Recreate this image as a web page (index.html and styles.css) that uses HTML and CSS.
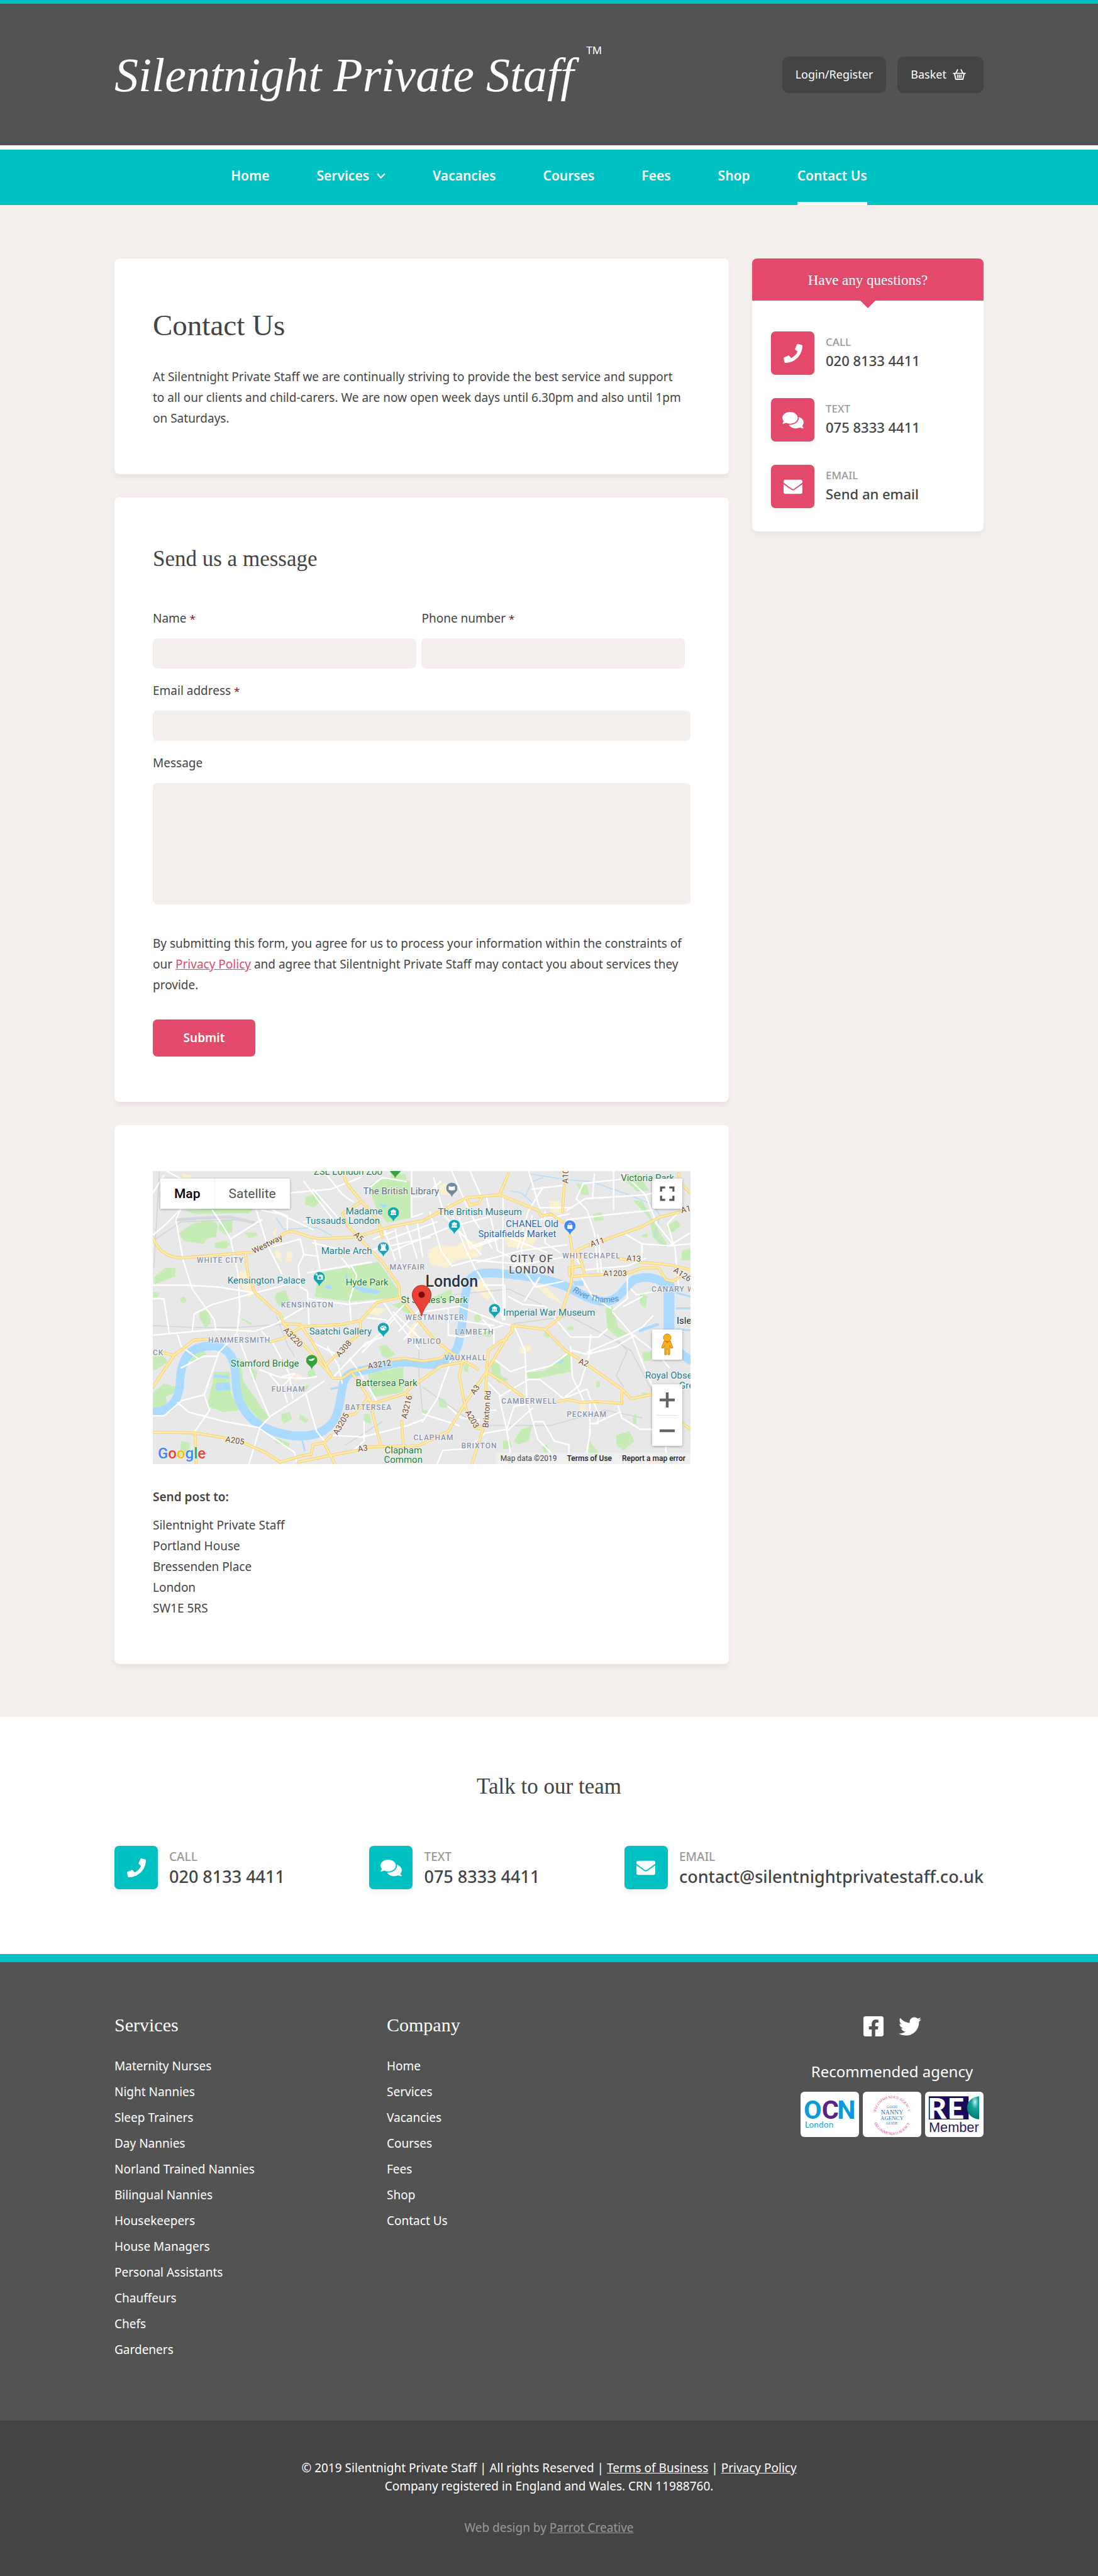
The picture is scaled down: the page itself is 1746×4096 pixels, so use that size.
FILE: index.html
```html
<!DOCTYPE html>
<html lang="en">
<head>
    <meta charset="UTF-8">
    <meta name="viewport" content="width=device-width, initial-scale=1.0">
    <title>Contact Us | Silentnight Private Staff</title>
    <link rel="stylesheet" href="styles.css">
</head>
<body>
    <!-- Shared icons -->
    <svg class="sprite" aria-hidden="true">
        <symbol id="icon-phone" viewBox="0 0 512 512"><path d="M493.4 24.6l-104-24c-11.3-2.6-22.9 3.3-27.5 13.9l-48 112c-4.2 9.8-1.4 21.3 6.9 28l60.6 49.6c-36 76.7-98.9 140.5-177.2 177.2l-49.6-60.6c-6.8-8.3-18.2-11.1-28-6.9l-112 48C3.9 366.5-2 378.1.6 389.4l24 104C27.1 504.2 36.7 512 48 512c256.1 0 464-207.5 464-464 0-11.2-7.7-20.9-18.6-23.4z"/></symbol>
        <symbol id="icon-comments" viewBox="0 0 576 512"><path d="M416 192c0-88.4-93.1-160-208-160S0 103.6 0 192c0 34.3 14.1 65.9 38 92-13.4 30.2-35.5 54.2-35.8 54.5-2.2 2.3-2.8 5.7-1.5 8.7S4.8 352 8 352c36.6 0 66.9-12.3 88.7-25 32.2 15.7 70.3 25 111.3 25 114.9 0 208-71.6 208-160zm122 220c23.9-26 38-57.7 38-92 0-66.9-53.5-124.2-129.3-148.1.9 6.6 1.3 13.3 1.3 20.1 0 105.9-107.7 192-240 192-10.8 0-21.3-.8-31.7-1.9C207.8 439.6 281.8 480 368 480c41 0 79.1-9.2 111.3-25 21.8 12.7 52.1 25 88.7 25 3.2 0 6.1-1.9 7.3-4.8 1.3-2.9.7-6.3-1.5-8.7-.3-.3-22.4-24.2-35.8-54.5z"/></symbol>
        <symbol id="icon-envelope" viewBox="0 0 512 512"><path d="M502.3 190.8c3.9-3.1 9.7-.2 9.7 4.7V400c0 26.5-21.5 48-48 48H48c-26.5 0-48-21.5-48-48V195.6c0-5 5.7-7.8 9.7-4.7 22.4 17.4 52.1 39.5 154.1 113.6 21.1 15.4 56.7 47.8 92.2 47.6 35.7.3 72-32.8 92.3-47.6 102-74.1 131.6-96.3 154-113.7zM256 320c23.2.4 56.6-29.2 73.4-41.4 132.7-96.3 142.8-104.7 173.4-128.7 5.8-4.5 9.2-11.5 9.2-18.9v-19c0-26.5-21.5-48-48-48H48c-26.5 0-48 21.5-48 48v19c0 7.4 3.4 14.3 9.2 18.9 30.6 23.9 40.7 32.4 173.4 128.7 16.8 12.2 50.2 41.8 73.4 41.4z"/></symbol>
        <symbol id="pin" viewBox="0 0 18 23"><path d="M9 0a9 9 0 0 1 9 9c0 4-3 6-5 8-2 2-3 3-4 6-1-3-2-4-4-6-2-2-5-4-5-8a9 9 0 0 1 9-9z"/></symbol>
        <symbol id="museum" viewBox="0 0 10 10"><path fill="#fff" d="M5 0l5 3v1H0V3zM1 4h8v4H1zM0 8h10v2H0z"/><path fill="#12a5b5" d="M3 5h1v3H3zM6 5h1v3H6z"/></symbol>
    </svg>

    <header class="header">
        <div class="container header-inner">
            <a href="#" class="logo">Silentnight Private Staff<sup class="logo-tm">TM</sup></a>
            <div class="header-actions">
                <a href="#" class="header-btn">Login/Register</a>
                <a href="#" class="header-btn basket-btn">Basket
                    <svg class="basket-icon" viewBox="0 0 22 18" aria-hidden="true">
                        <path d="M8 1L5 7M14 1l3 6M1 7h20M3 8l2 9h12l2-9M8 10v4M11 10v4M14 10v4" fill="none" stroke="#fff" stroke-width="2" stroke-linecap="round" stroke-linejoin="round"/>
                    </svg>
                </a>
            </div>
        </div>
    </header>

    <nav class="nav">
        <a href="#" class="nav-link">Home</a>
        <a href="#" class="nav-link">Services
            <svg class="nav-arrow" viewBox="0 0 13 9" aria-hidden="true"><path d="M1 1l5 6 6-6" fill="none" stroke="#fff" stroke-width="2"/></svg>
        </a>
        <a href="#" class="nav-link">Vacancies</a>
        <a href="#" class="nav-link">Courses</a>
        <a href="#" class="nav-link">Fees</a>
        <a href="#" class="nav-link">Shop</a>
        <a href="#" class="nav-link active">Contact Us</a>
    </nav>

    <main class="main">
        <div class="container columns">
            <div class="content">
                <section class="card">
                    <h1>Contact Us</h1>
                    <p class="intro">At Silentnight Private Staff we are continually striving to provide the best service and support to all our clients and child-carers. We are now open week days until 6.30pm and also until 1pm on Saturdays.</p>
                </section>

                <section class="card">
                    <h2>Send us a message</h2>
                    <form class="contact-form">
                        <div class="field field-half">
                            <label for="name">Name <span class="required">*</span></label>
                            <input type="text" id="name">
                        </div>
                        <div class="field field-half">
                            <label for="phone">Phone number <span class="required">*</span></label>
                            <input type="tel" id="phone">
                        </div>
                        <div class="field">
                            <label for="email">Email address <span class="required">*</span></label>
                            <input type="email" id="email">
                        </div>
                        <div class="field">
                            <label for="message">Message</label>
                            <textarea id="message"></textarea>
                        </div>
                        <p class="terms">By submitting this form, you agree for us to process your information within the constraints of our <a href="#">Privacy Policy</a> and agree that Silentnight Private Staff may contact you about services they provide.</p>
                        <button type="submit" class="submit-btn">Submit</button>
                    </form>
                </section>

                <section class="card">
                    <div class="map">
                        <svg class="map-canvas" viewBox="0 0 856 467" role="img" aria-label="Map of London">
                            <rect width="856" height="467" fill="#e8e8e8"/>
                            <g transform="translate(-7 -8) scale(.291 .306)" fill="none" stroke-linecap="round" stroke-linejoin="round">
                                <!-- parks -->
                                <g fill="#c5ecb4">
                                    <path d="M165 350l75-50 110-20 30 30-10 60-50 5-15 30-110-15zM390 280l70 0 0 60-35 20-40-30zM360 400l60-10 30 15-30 25-55-5zM525 345l60 0 15 15-50 15zM200 230l200-10 180 0-30 25-300 5z"/>
                                    <path d="M860 160l60-15 25 35-40 35-50-15zM1220 90l130-40 80 30 5 190-130 25-60-80-40-100zM1330 40h80v40h-90z"/>
                                    <path d="M930 555l330-55 110 150-10 35-260 20-190-25z"/>
                                    <path d="M700 660l50-15 25 65-60 20-25-40zM30 580l60-50 60 0-5 45-110 40zM25 655l35 5-10 25H25zM280 760l50-10 10 70-30 20-30-50z"/>
                                    <path d="M175 685l20-5 15 20-15 15-20-10zM510 790l60 30-10 5-50-25zM230 990l60-35 30 25-60 40-35-5z"/>
                                    <path d="M24 1180l60-50 70 20-10 30-50 20 10 50-80 10zM24 990l60 0 20 30-60 40H24z"/>
                                    <path d="M360 1070l85 0 5 110 50 90-90 10-90-30 30-120zM470 1000l30 0 20 120 80 110 60 80-40 20-90-90-60-120z"/>
                                    <path d="M560 1050l35 20-10 50-20-10zM730 1290l45-10 10 35-40 25-20-20zM830 1290l45 30-15 20-35-25zM690 1410l80 30 0 25-80-30zM180 1430l50 10-10 50-50 20z"/>
                                    <path d="M1200 1080l195-35 0 130-165 30zM1330 720l60-10 60 50-30 10zM1540 690l120-50 0 60-130 20zM1260 940l40-10 50 50-40 20-30-10z"/>
                                    <path d="M870 1070l30-20 20 40-45 10zM830 1150l50-10-20 30-30 5zM1180 1290l30 0 10 50-40-10zM1500 1270l30 0-10 30-20-5z"/>
                                    <path d="M1830 850l30-10 30 20-20 30-40-5zM1870 1010l50 20 10 60 40 20-50 20-40-40zM2070 1075l100-10 80-70 60-20 0 95-230 45z"/>
                                    <path d="M2500 740l40-10 30 110 50 30-50 25-60-50zM2590 60l90-20 60 90-70 0zM2650 180l50 0 100 170 40 60-30 10-50-50-20-100z"/>
                                    <path d="M2840 310l50-30 20 30-40 35-30-15zM2430 250l50-10 10 40-50 10zM2340 90l60 10 10 50-40 0zM2690 660l40 20-10 60-30-20zM2700 970l50-5 0 50-40 0z"/>
                                    <path d="M2040 1370l60-20-20 80-60 20-20-20zM2150 1460l30-10 10 30-20 20zM2410 1430l100 110-100 0zM2560 1400l70-20 30 50-60 50-40-30zM2650 1300l20-10 0 50-20 0z"/>
                                    <path d="M1590 1200l35 20 10 40-45-10zM1940 1430l40-5 10 40-50 10zM2450 1120l20 0 0 30-20 5zM1780 780l30-20 10 40-30 20zM2290 840l30-10 10 20-30 5z"/>
                                    <path d="M1720 1030l30 0 0 40-20 0zM2170 860l30 10-10 25-30-10zM2700 360l30-10 0 20-25 0zM2700 1180l30 0 0 25-30 0zM2920 440l45-10 0 60-50 0z"/>
                                </g>
                                <!-- built up areas -->
                                <g fill="#fbf0cf">
                                    <path d="M1530 440l60-30 90 10 60-40 90 30-20 60-120 20-60 40-90-20zM1760 580l70 20 60 60-30 40-80-60zM1930 350l80-20 120 40-40 60-120-10zM500 550l40-10 10 60 20 60-20 30-20-40-40-50z"/>
                                    <path d="M690 440l30 0 10 60-30-20zM760 440l30 10-10 50-30 0zM680 340l30-20-20 50zM1200 740l100 0-40 40-50-10zM790 1090l30-10 30 25-40 15zM1420 850l40-40 10 60-40 30zM2110 610l80 30 80 80-90-40zM2030 940l60-10 10 30-60 20z"/>
                                    <path d="M2190 180l60 0 20 70-70-10zM2360 1230l30 0 10 60-40-10zM1590 100l40-10 30 60-60 0zM180 40l60 10-40 30z"/>
                                </g>
                                <!-- small lakes -->
                                <g fill="#aadaff">
                                    <path d="M1125 625l50 5 95 20-10 15-80-5-55-25zM970 620l30 0 0 20-28 0zM360 1085l80 5 0 15-85-5zM370 1130l70-5 10 40-80 5zM2680 850l110-35 5 15-110 35zM2230 1030l50-30-20 25zM2320 600l60-5 0 30-50-5zM1075 560l10 0 10 40-15-5zM1260 200l50 0-20 20z"/>
                                </g>
                                <!-- railways -->
                                <g stroke="#d0d4d8" stroke-width="5">
                                    <path d="M24 390L180 290 500 280 600 300M24 830l220 10 240 0 300-20M700 780l60 150 40 60M1480 900l0 180 20 200M1280 1330l-200 120M2000 820l300-40 200 100 140 80 110 200 30 80M1500 1150l300 200 400 0 300-80 200 40M60 27l-30 500M2150 720l-180-80-300 30M2560 900l60 60-60 130 40 60"/>
                                </g>
                                <path d="M150 280l160-10 130-5 140 30" stroke="#d3d8dc" stroke-width="16"/>
                                <!-- canals -->
                                <path d="M700 270l40 60 180-10 80 40M1980 130l60 10 60 50M2060 160l40-80 60-20M2080 40l200 30 140 10 180 60 160 60M2760 200l40 60-30 100 60 60" stroke="#b5dcf8" stroke-width="5"/>
                                <!-- Thames -->
                                <path d="M24 1280C110 1280 165 1230 172 1130C176 1030 205 965 280 945C360 925 420 935 455 995C490 1060 465 1150 500 1230C540 1310 610 1360 700 1385C800 1415 900 1410 960 1375C1030 1335 1040 1270 1055 1190C1065 1100 1085 1075 1150 1068C1250 1050 1330 1020 1420 1020C1480 1022 1520 1040 1580 1030C1680 1010 1700 940 1715 830C1730 720 1730 640 1760 590C1800 545 1880 555 1960 562C2080 575 2180 585 2280 625C2360 660 2420 705 2510 705C2590 690 2610 620 2660 590C2720 570 2800 580 2840 630C2870 720 2830 820 2850 890C2880 960 2930 990 2965 1010" stroke="#aadaff" stroke-width="46"/>
                                <path d="M2848 620v260" stroke="#aadaff" stroke-width="60"/>
                                <path d="M2890 660l75 20M2890 740l75 0M2890 850l75 5M840 1420l15 60M1000 1160l50-10" stroke="#aadaff" stroke-width="10"/>
                                <!-- minor roads -->
                                <g stroke="#fff" stroke-width="8">
                                    <path d="M24 360L100 300 180 220 150 280 190 490 240 640 360 800 370 860M350 230L400 300 450 380 490 560 500 740 485 870 580 1120 660 1300M590 230l60 180 80 150M100 27l120 60 40 80M24 140l60-90"/>
                                    <path d="M24 620h180l180 10 200 30 240-60M24 690h60l30 180M24 880L380 850l200 10 120-40 160-90M240 860l10-90 100-50 230-60M485 870l-100 100-80 220 30 80-80 110"/>
                                    <path d="M160 1230l60 50 200 50 180 30 200 130 10 50M24 1300h60l100-80 120-30M180 1050l120-60 80 0M160 880l20 60 90 60M550 1550l60-190 60-60 150-90 140-90M860 1180l60 200 50 60M720 1100l140 5 60-10M610 1060l110 40 70-20"/>
                                    <path d="M450 380l150-90 20-10M680 420l150-40 20 80 80 10M760 340l0-80-80-30M620 230l100 20 180 80M850 460l-30 60 10 110 40 20 10 200M910 380l30 170M940 290l-90 0M870 555l350-55M1110 520l30 50-40 130 10 120M870 690l220 30 280-30M1060 480l40 50M900 400l260 60 120-40"/>
                                    <path d="M620 860l60 60 90 160 20 130M980 940l60 100 20 90M1170 970l180-180M1010 1100l180-180 90-30M1100 1000l60 80 100 160M720 1160l80-80M660 1080l80 90 20 60M900 920l130 60 50-60M1180 1330l0 100-60 50M1000 1400l170 10 250-60 80-30"/>
                                    <path d="M900 120l120 130 40 50M960 27l100 120 60 40M780 140l220-20 160-60M850 80l160 200M1440 27v240l60-20M1200 120l80-60 130 20M1440 160l60 0 100-80M1320 380l260-90M1340 440l300-120 240-60M1230 380l110-40M1250 430l290-60"/>
                                    <path d="M1290 330l60 160M1350 330l30 150M1410 300l60 180M1470 290l30 180M1540 240l60 200 60 80M1640 200l90 220 60 120M1700 270l60 160 180-60M1560 60l60 200 200 200M1660 27l100 220 120 180M1850 160l60 280 120 60"/>
                                    <path d="M1940 160v640l-20-60-120-190M1760 420l180-60 240 90M1800 500l240-60 250-30M2020 430l60-200 80-120M2100 260l-60 170 20 120 60 80 150-30M2170 240l0 160 80 50M1980 310l320-60M2000 520l180-30 120-20M1660 520l120-30 260 20"/>
                                    <path d="M1500 760l200-30 240 90 60 10M1640 740l0 140 80 10 220-60M1830 800l60 60 0 70M1670 800l220 30M2000 830l60 130 10 260 60 200 70 70 30 60M2070 1070l130-30 100-70M2080 1110l60 0 80 60 50 40 130-50 20 60M1900 1010l80 60 90-30M1950 800v-180l-120 0"/>
                                    <path d="M2050 720l120 10 140 160 150 0 50-40M2060 700l80-120M2050 720l-80-40M2320 960l80 20 160-40 100-60M2310 940l10 160 60 120M2420 960l-60 180-80 60M2410 970l10-90M2540 760l100 110 150 110 60 70M2640 870l-240 100M2640 870l60-30 60-60M2640 870l60 150 60 130"/>
                                    <path d="M2330 460l60 100M2370 580l60 100 100 60M2390 540l230-20 100-40M2460 550l-20-200-40-120-60-60 40-80 200-20M2290 230l100-60 330-20 160-40M2290 280l260-30 210-20M2600 40l120 110 60 150 100 120 20 200M2610 355l90 50 0 90M2700 405l150 10 115-10M2545 27l0 200"/>
                                    <path d="M2870 400l-30-100 60-60M2460 360l20 200M2620 560l0 130-80 60M2700 680l-100 50M2960 350l-100 60M2640 640l30 30 180-30M2100 120l180-20M2080 27l60 190 180 0M1760 27l60 130M2430 160l10-120"/>
                                    <path d="M1580 1550l30-70 140-10 90-80 120-20 40-120 60-10M1960 1370l20 120-60 60M1960 1380l140-120M2110 1330l50 0 60 100 80 20 0 100M2415 1230l0 160-20 120 20 40M2420 1340l40 0 0-60-30-60M2570 1250l20 60 100 60 150 0M2440 1340l140-60M2840 1370l-10 110 20 60"/>
                                    <path d="M1500 1290l200 60M1500 1330l80-120 60-160 20-60M1900 1270l-40 0M1860 1130l60 60 10 60 30 120M1640 1250l70 60 100 10M1920 1200l160-90M1280 700l80 110 120 140M1340 760l160 150M1300 820l100-100M1370 860l120-120M1400 900l100-110M1200 790l100 10 20 40M1180 940l90-70"/>
                                </g>
                                <!-- main roads, casing then fill -->
                                <g stroke="#f4cf74" stroke-width="15">
                                    <path d="M24 370C50 440 100 475 180 478L520 452 565 450M720 365L760 342C820 335 860 375 940 378L1130 370 1330 315 1500 285 1740 165 1920 150 2130 230 2150 260 2200 250 2265 290M1070 50L1085 90 1165 185 1210 230 1260 290 1280 370M1165 185L1060 250 1090 310 1180 400 1280 500 1370 620 1375 680 1440 760 1500 830 1560 900 1640 960 1720 1010 1800 1055M530 455L545 560 580 655 680 745 720 770 740 820 830 825 900 920 1010 1105 1060 1105 1110 1070 1200 1050M1320 1010L1400 1000 1500 1015 1600 1000 1640 965M740 820L900 980 1010 1100M24 1150L140 985 250 905 330 900M80 972L140 985M665 915L740 895 840 835 1050 825 1160 805 1250 710 1370 685M970 1035L1030 980M1100 915L1160 870 1160 805M1110 1070L1210 1210 1230 1300 1270 1450M1195 1210L1230 1235 1400 1185 1440 1200M1400 1185L1450 1140 1500 1110 1600 1040 1720 1020M1385 1330L1395 1450M960 1440L1000 1400M1080 1300L1130 1290 1200 1210M24 1385L250 1388 420 1415M255 1390L262 1550M520 1440L640 1490 720 1540 850 1505 890 1500 900 1450 960 1440 1020 1550M820 1540L1000 1505 1140 1480M1190 1462L1480 1455 1640 1380 1730 1240 1850 1070 1960 890 1990 860 1990 830 2170 850 2250 790 2310 620 2320 560 2320 450 2305 360M2265 240L2275 100M2305 570L2300 530 2370 520M2340 440L2410 410M2480 390L2700 315 2800 265 2905 240M2350 440L2390 570M2575 480L2620 490M2690 500L2860 515 2965 540M2320 575L2400 568 2490 565M2600 565L2700 530 2790 530 2830 590 2870 600 2900 580M2170 850L2280 960 2350 1000M2410 1040L2590 1160 2640 1210 2750 1190M2590 1160L2590 1235 2450 1225 2370 1230 2290 1215 2240 1225M1850 1070L1950 1130 2050 1200M1850 1070L1845 1180M1830 1370L1770 1550M1730 1240L1745 1280M1785 1360L1830 1370M1720 1010L1700 1090 1730 1240M1850 1060L1860 960 1930 910 1960 900M1920 150L1970 40M1740 165L1760 205 1810 190 1825 160M2900 40L2910 90 2965 140M2910 1330L2965 1370" id="main-roads-casing"/>
                                </g>
                                <path stroke="#ffeaa5" stroke-width="9" d="M24 370C50 440 100 475 180 478L520 452 565 450M720 365L760 342C820 335 860 375 940 378L1130 370 1330 315 1500 285 1740 165 1920 150 2130 230 2150 260 2200 250 2265 290M1070 50L1085 90 1165 185 1210 230 1260 290 1280 370M1165 185L1060 250 1090 310 1180 400 1280 500 1370 620 1375 680 1440 760 1500 830 1560 900 1640 960 1720 1010 1800 1055M530 455L545 560 580 655 680 745 720 770 740 820 830 825 900 920 1010 1105 1060 1105 1110 1070 1200 1050M1320 1010L1400 1000 1500 1015 1600 1000 1640 965M740 820L900 980 1010 1100M24 1150L140 985 250 905 330 900M80 972L140 985M665 915L740 895 840 835 1050 825 1160 805 1250 710 1370 685M970 1035L1030 980M1100 915L1160 870 1160 805M1110 1070L1210 1210 1230 1300 1270 1450M1195 1210L1230 1235 1400 1185 1440 1200M1400 1185L1450 1140 1500 1110 1600 1040 1720 1020M1385 1330L1395 1450M960 1440L1000 1400M1080 1300L1130 1290 1200 1210M24 1385L250 1388 420 1415M255 1390L262 1550M520 1440L640 1490 720 1540 850 1505 890 1500 900 1450 960 1440 1020 1550M820 1540L1000 1505 1140 1480M1190 1462L1480 1455 1640 1380 1730 1240 1850 1070 1960 890 1990 860 1990 830 2170 850 2250 790 2310 620 2320 560 2320 450 2305 360M2265 240L2275 100M2305 570L2300 530 2370 520M2340 440L2410 410M2480 390L2700 315 2800 265 2905 240M2350 440L2390 570M2575 480L2620 490M2690 500L2860 515 2965 540M2320 575L2400 568 2490 565M2600 565L2700 530 2790 530 2830 590 2870 600 2900 580M2170 850L2280 960 2350 1000M2410 1040L2590 1160 2640 1210 2750 1190M2590 1160L2590 1235 2450 1225 2370 1230 2290 1215 2240 1225M1850 1070L1950 1130 2050 1200M1850 1070L1845 1180M1830 1370L1770 1550M1730 1240L1745 1280M1785 1360L1830 1370M1720 1010L1700 1090 1730 1240M1850 1060L1860 960 1930 910 1960 900M1920 150L1970 40M1740 165L1760 205 1810 190 1825 160M2900 40L2910 90 2965 140M2910 1330L2965 1370"/>
                            </g>

                            <g class="place">
                                <text x="256" y="6" class="green">ZSL London Zoo</text>
                                <text x="335" y="37" class="slate">The British Library</text>
                                <text x="307" y="69">Madame</text>
                                <text x="243" y="84">Tussauds London</text>
                                <text x="268" y="132">Marble Arch</text>
                                <text x="119" y="179">Kensington Palace</text>
                                <text x="307" y="182" class="green">Hyde Park</text>
                                <text x="395" y="210" class="green">St James's Park</text>
                                <text x="249" y="260">Saatchi Gallery</text>
                                <text x="124" y="311" class="green">Stamford Bridge</text>
                                <text x="323" y="342" class="green">Battersea Park</text>
                                <text x="369" y="450" class="green">Clapham</text>
                                <text x="368" y="465" class="green">Common</text>
                                <text x="454" y="70">The British Museum</text>
                                <text x="562" y="89" class="blue">CHANEL Old</text>
                                <text x="518" y="105" class="blue">Spitalfields Market</text>
                                <text x="558" y="230">Imperial War Museum</text>
                                <text x="745" y="16" class="green">Victoria Park</text>
                                <text x="784" y="330">Royal Observatory</text>
                                <text x="838" y="346">Greenwich</text>
                                <text x="834" y="243" class="dark">Isle of Dogs</text>
                            </g>
                            <g class="area">
                                <text x="70" y="146">WHITE CITY</text>
                                <text x="377" y="157">MAYFAIR</text>
                                <text x="204" y="217">KENSINGTON</text>
                                <text x="402" y="237">WESTMINSTER</text>
                                <text x="88" y="273">HAMMERSMITH</text>
                                <text x="0" y="293">CK</text>
                                <text x="405" y="275">PIMLICO</text>
                                <text x="189" y="351">FULHAM</text>
                                <text x="306" y="380">BATTERSEA</text>
                                <text x="415" y="429">CLAPHAM</text>
                                <text x="491" y="442">BRIXTON</text>
                                <text x="481" y="260">LAMBETH</text>
                                <text x="464" y="301">VAUXHALL</text>
                                <text x="555" y="370">CAMBERWELL</text>
                                <text x="659" y="391">PECKHAM</text>
                                <text x="652" y="139">WHITECHAPEL</text>
                                <text x="794" y="192">CANARY WHARF</text>
                            </g>
                            <g class="road">
                                <text transform="translate(161 132) rotate(-27)">Westway</text>
                                <text transform="translate(319 102) rotate(45)">A5</text>
                                <text transform="translate(207 254) rotate(46)">A3220</text>
                                <text transform="translate(297 297) rotate(-48)">A308</text>
                                <text transform="translate(343 315) rotate(-9)">A3212</text>
                                <text transform="translate(294 421) rotate(-60)">A3205</text>
                                <text transform="translate(404 395) rotate(-76)">A3216</text>
                                <text transform="translate(115 431) rotate(9)">A205</text>
                                <text transform="translate(327 447) rotate(-8)">A3</text>
                                <text transform="translate(512 357) rotate(-55)">A3</text>
                                <text transform="translate(497 384) rotate(60)">A203</text>
                                <text transform="translate(534 409) rotate(-86)">Brixton Rd</text>
                                <text transform="translate(677 306) rotate(22)">A2</text>
                                <text transform="translate(698 121) rotate(-18)">A11</text>
                                <text transform="translate(754 143) rotate(3)">A13</text>
                                <text x="717" y="167">A1203</text>
                                <text transform="translate(828 160) rotate(33)">A1261</text>
                                <text transform="translate(661 20) rotate(-88)">A10</text>
                                <text transform="translate(842 67) rotate(-14)">A12</text>
                            </g>
                            <text x="434" y="184" class="city">London</text>
                            <g class="district">
                                <text x="569" y="145">CITY OF</text>
                                <text x="567" y="163">LONDON</text>
                            </g>
                            <path id="thames" d="M668 191C690 208 725 218 768 198" fill="none"/>
                            <text class="river"><textPath href="#thames">River Thames</textPath></text>

                            <g fill="#12a5b5">
                                <use href="#pin" x="374" y="57" width="18" height="24"/>
                                <use href="#pin" x="358" y="113" width="18" height="24"/>
                                <use href="#pin" x="256" y="160" width="18" height="24"/>
                                <use href="#pin" x="358" y="241" width="18" height="24"/>
                                <use href="#pin" x="471" y="77" width="18" height="24"/>
                                <use href="#pin" x="535" y="211" width="18" height="24"/>
                                <use href="#pin" x="467" y="18" width="18" height="24" fill="#6f8a9a"/>
                                <use href="#pin" x="655" y="78" width="18" height="24" fill="#4285f4"/>
                                <use href="#pin" x="244" y="292" width="18" height="24" fill="#34a240"/>
                                <use href="#pin" x="377" y="-12" width="18" height="24" fill="#34a240"/>
                            </g>
                            <use href="#museum" x="378" y="61" width="10" height="9"/>
                            <use href="#museum" x="475" y="81" width="10" height="9"/>
                            <use href="#museum" x="539" y="215" width="10" height="9"/>
                            <g fill="#fff">
                                <path d="M363 116h2v2h1v-2h2v2h1v-2h2v4h-1l1 5h1v2h-10v-2h1l1-5h-1z"/>
                                <path d="M262 166h3l1-1h3l1 1h1v7h-9zM259 163h3v3h-3z"/>
                                <ellipse cx="367" cy="250" rx="5" ry="4"/>
                                <path d="M471 24l5 1 5-1v6l-5 1-5-1zM660 86h8v6h-8zM248 300c2-2 3 1 5-1 2-1 3 0 5-2-1 6-8 7-10 3z"/>
                            </g>
                            <path d="M662 86v-1a2 2 0 0 1 4 0v1" fill="none" stroke="#fff"/>
                            <g fill="#12a5b5"><circle cx="365" cy="249" r="1"/><circle cx="368" cy="248" r="1"/><circle cx="370" cy="251" r="1"/><circle cx="266" cy="170" r="2"/></g>

                            <!-- office marker -->
                            <path d="M428 182c9 0 15 7 15 15 0 12-11 17-15 34-4-17-15-22-15-34 0-8 6-15 15-15z" fill="#ea4335" stroke="#b3261e"/>
                            <circle cx="428" cy="197" r="5" fill="#7a0c0c"/>
                        </svg>

                        <div class="map-types">
                            <button type="button" class="map-type selected">Map</button>
                            <button type="button" class="map-type">Satellite</button>
                        </div>
                        <button type="button" class="map-control map-fullscreen" aria-label="Toggle fullscreen">
                            <svg viewBox="0 0 22 22"><path d="M2 8V2h6M14 2h6v6M20 14v6h-6M8 20H2v-6" fill="none" stroke="#555" stroke-width="3"/></svg>
                        </button>
                        <div class="map-side">
                            <button type="button" class="map-control" aria-label="Street View">
                                <svg class="pegman" viewBox="0 0 22 36"><path d="M6 12h10l4 11-3 1-2-5v15h-3v-9h-2v9H7V19l-2 5-3-1z" fill="#fbb11d" stroke="#c98412"/><path d="M7 12l4 4 4-4z" fill="#e0701a"/><circle cx="11" cy="7" r="6" fill="#fbb11d" stroke="#c98412"/></svg>
                            </button>
                            <div class="map-zoom">
                                <button type="button" aria-label="Zoom in"><svg viewBox="0 0 22 22"><path d="M11 0v22M0 11h22" stroke="#666" stroke-width="4"/></svg></button>
                                <button type="button" aria-label="Zoom out"><svg viewBox="0 0 22 22"><path d="M0 11h22" stroke="#666" stroke-width="4"/></svg></button>
                            </div>
                        </div>
                        <div class="map-brand"><span class="g-blue">G</span><span class="g-red">o</span><span class="g-yellow">o</span><span class="g-blue">g</span><span class="g-green">l</span><span class="g-red">e</span></div>
                        <div class="map-legal">
                            <span>Map data ©2019</span>
                            <a href="#">Terms of Use</a>
                            <a href="#">Report a map error</a>
                        </div>
                    </div>
                    <p class="post-title">Send post to:</p>
                    <address>
                        Silentnight Private Staff<br>
                        Portland House<br>
                        Bressenden Place<br>
                        London<br>
                        SW1E 5RS
                    </address>
                </section>
            </div>

            <aside class="sidebar">
                <div class="sidebar-title">Have any questions?</div>
                <div class="sidebar-body">
                    <a href="#" class="contact-item">
                        <span class="contact-icon"><svg><use href="#icon-phone"/></svg></span>
                        <span class="contact-text"><span class="contact-label">CALL</span><span class="contact-value">020 8133 4411</span></span>
                    </a>
                    <a href="#" class="contact-item">
                        <span class="contact-icon"><svg class="wide"><use href="#icon-comments"/></svg></span>
                        <span class="contact-text"><span class="contact-label">TEXT</span><span class="contact-value">075 8333 4411</span></span>
                    </a>
                    <a href="#" class="contact-item">
                        <span class="contact-icon"><svg><use href="#icon-envelope"/></svg></span>
                        <span class="contact-text"><span class="contact-label">EMAIL</span><span class="contact-value">Send an email</span></span>
                    </a>
                </div>
            </aside>
        </div>
    </main>

    <section class="talk">
        <div class="container">
            <h2>Talk to our team</h2>
            <div class="talk-items">
                <a href="#" class="contact-item">
                    <span class="contact-icon"><svg><use href="#icon-phone"/></svg></span>
                    <span class="contact-text"><span class="contact-label">CALL</span><span class="contact-value">020 8133 4411</span></span>
                </a>
                <a href="#" class="contact-item">
                    <span class="contact-icon"><svg class="wide"><use href="#icon-comments"/></svg></span>
                    <span class="contact-text"><span class="contact-label">TEXT</span><span class="contact-value">075 8333 4411</span></span>
                </a>
                <a href="#" class="contact-item">
                    <span class="contact-icon"><svg><use href="#icon-envelope"/></svg></span>
                    <span class="contact-text"><span class="contact-label">EMAIL</span><span class="contact-value">contact@silentnightprivatestaff.co.uk</span></span>
                </a>
            </div>
        </div>
    </section>

    <footer class="footer">
        <div class="container footer-inner">
            <div class="footer-col">
                <h3>Services</h3>
                <ul>
                    <li><a href="#">Maternity Nurses</a></li>
                    <li><a href="#">Night Nannies</a></li>
                    <li><a href="#">Sleep Trainers</a></li>
                    <li><a href="#">Day Nannies</a></li>
                    <li><a href="#">Norland Trained Nannies</a></li>
                    <li><a href="#">Bilingual Nannies</a></li>
                    <li><a href="#">Housekeepers</a></li>
                    <li><a href="#">House Managers</a></li>
                    <li><a href="#">Personal Assistants</a></li>
                    <li><a href="#">Chauffeurs</a></li>
                    <li><a href="#">Chefs</a></li>
                    <li><a href="#">Gardeners</a></li>
                </ul>
            </div>
            <div class="footer-col">
                <h3>Company</h3>
                <ul>
                    <li><a href="#">Home</a></li>
                    <li><a href="#">Services</a></li>
                    <li><a href="#">Vacancies</a></li>
                    <li><a href="#">Courses</a></li>
                    <li><a href="#">Fees</a></li>
                    <li><a href="#">Shop</a></li>
                    <li><a href="#">Contact Us</a></li>
                </ul>
            </div>
            <div class="footer-side">
                <div class="social">
                    <a href="#" aria-label="Facebook"><svg class="facebook" viewBox="0 32 448 448"><path d="M400 32H48A48 48 0 0 0 0 80v352a48 48 0 0 0 48 48h137.250V327.690h-63V256h63v-54.640c0-62.150 37-96.480 93.670-96.480 27.140 0 55.520 4.840 55.520 4.840v61h-31.270c-30.810 0-40.420 19.120-40.420 38.730V256h68.780l-11 71.690h-57.780V480H400a48 48 0 0 0 48-48V80a48 48 0 0 0-48-48z"/></svg></a>
                    <a href="#" aria-label="Twitter"><svg class="twitter" viewBox="0 48 512 416"><path d="M459.370 151.716c.325 4.548.325 9.097.325 13.645 0 138.720-105.583 298.558-298.558 298.558-59.452 0-114.680-17.219-161.137-47.106 8.447.974 16.568 1.299 25.340 1.299 49.055 0 94.213-16.568 130.274-44.832-46.132-.975-84.792-31.188-98.112-72.772 6.498.974 12.995 1.624 19.818 1.624 9.421 0 18.843-1.300 27.614-3.573-48.081-9.747-84.143-51.980-84.143-102.985v-1.299c13.969 7.797 30.214 12.670 47.431 13.319-28.264-18.843-46.781-51.005-46.781-87.391 0-19.492 5.197-37.360 14.294-52.954 51.655 63.675 129.300 105.258 216.365 109.807-1.624-7.797-2.599-15.918-2.599-24.040 0-57.828 46.782-104.934 104.934-104.934 30.213 0 57.502 12.670 76.670 33.137 23.715-4.548 46.456-13.320 66.599-25.340-7.798 24.366-24.366 44.833-46.132 57.827 21.117-2.273 41.584-8.122 60.426-16.243-14.292 20.791-32.161 39.308-52.628 54.253z"/></svg></a>
                </div>
                <p class="agency-title">Recommended agency</p>
                <div class="badges">
                    <svg class="badge" viewBox="0 0 94 72" role="img" aria-label="OCN London">
                        <g class="ocn">
                            <text x="5" y="43" fill="#0a9bdc">O</text>
                            <text x="59" y="43" fill="#0a9bdc">N</text>
                            <text x="34" y="43" fill="#5b2382" stroke="#fff" stroke-width="2" paint-order="stroke">C</text>
                        </g>
                        <text x="7" y="57" class="ocn-city">London</text>
                    </svg>
                    <svg class="badge" viewBox="0 0 94 72" role="img" aria-label="Good Nanny Agency Guide recommended agency">
                        <path id="arc-top" d="M21 36a26 26 0 0 1 52 0" fill="none"/>
                        <path id="arc-bottom" d="M16 38a31 31 0 0 0 62 0" fill="none"/>
                        <g class="nanny-ring">
                            <text><textPath href="#arc-top" startOffset="50%">RECOMMENDED AGENCY</textPath></text>
                            <text><textPath href="#arc-bottom" startOffset="50%">RECOMMENDED AGENCY</textPath></text>
                        </g>
                        <g class="nanny">
                            <text x="47" y="26" font-size="6">GOOD</text>
                            <text x="47" y="36" font-size="10">NANNY</text>
                            <text x="47" y="45" font-size="9">AGENCY</text>
                            <text x="47" y="52" font-size="6">GUIDE</text>
                        </g>
                    </svg>
                    <svg class="badge" viewBox="0 0 94 72" role="img" aria-label="REC Member">
                        <defs>
                            <radialGradient id="sphere" cx=".65" cy=".25" r=".8"><stop offset="0" stop-color="#c9efe9"/><stop offset=".35" stop-color="#17a79b"/><stop offset="1" stop-color="#00716f"/></radialGradient>
                        </defs>
                        <path d="M6 7h64v37H6z" fill="#1b0a5c"/>
                        <path d="M87 5a24 21 0 0 0 0 41z" fill="#fff"/>
                        <path d="M87 7c-26 2-26 35 0 37z" fill="url(#sphere)"/>
                        <g class="rec"><text x="4" y="43">R</text><text x="36" y="43">E</text></g>
                        <text x="6" y="64" class="rec-member">Member</text>
                    </svg>
                </div>
            </div>
        </div>
    </footer>

    <div class="legal">
        <p>© 2019 Silentnight Private Staff | All rights Reserved | <a href="#">Terms of Business</a> | <a href="#">Privacy Policy</a><br>
        Company registered in England and Wales. CRN 11988760.</p>
        <p class="credit">Web design by <a href="#">Parrot Creative</a></p>
    </div>
</body>
</html>
```
FILE: styles.css
```css
* {
    margin: 0;
    padding: 0;
    box-sizing: border-box;
}

body {
    font-family: 'Noto Sans', 'Open Sans', sans-serif;
    font-size: 19px;
    line-height: 33px;
    color: #444;
    background-color: #444;
}

a {
    color: inherit;
    text-decoration: none;
}

h1,
h2,
h3,
.sidebar-title {
    font-family: 'Liberation Serif', serif;
    font-weight: 400;
}

h1 {
    font-size: 47px;
    line-height: 66px;
    margin-bottom: 33px;
}

h2 {
    font-size: 35px;
    line-height: 50px;
}

.sprite {
    position: absolute;
    width: 0;
    height: 0;
}

.container {
    width: 92%;
    max-width: 1382px;
    margin: 0 auto;
}

/* Header */
.header {
    background-color: #535353;
    border-top: 6px solid #00c1c1;
    border-bottom: 7px solid #fff;
}

.header-inner {
    display: flex;
    align-items: center;
    justify-content: space-between;
    height: 225px;
}

.logo {
    font-family: 'Liberation Serif', serif;
    font-style: italic;
    font-size: 76px;
    line-height: 102px;
    color: #fff;
    white-space: nowrap;
    display: flex;
}

.logo-tm {
    font-family: 'Noto Sans', sans-serif;
    font-style: normal;
    font-size: 17px;
    line-height: 24px;
    margin-left: 20px;
}

.header-actions {
    display: flex;
    gap: 18px;
}

.header-btn {
    display: flex;
    align-items: center;
    gap: 10px;
    height: 58px;
    padding: 0 21px;
    border-radius: 10px;
    background-color: #444;
    color: #fff;
    font-size: 18px;
}

.basket-btn {
    padding-right: 28px;
}

.basket-icon {
    width: 21px;
    height: 17px;
}

/* Navigation */
.nav {
    display: flex;
    justify-content: center;
    gap: 75px;
    background-color: #00c1c1;
}

.nav-link {
    display: flex;
    align-items: center;
    gap: 12px;
    height: 88px;
    border-bottom: 5px solid transparent;
    color: #fff;
    font-size: 21px;
    font-weight: 600;
}

.nav-link.active {
    border-bottom-color: #fff;
}

.nav-arrow {
    width: 14px;
    height: 10px;
}

/* Page columns */
.main {
    background-color: #f4efed;
    padding: 85px 0 84px;
}

.columns {
    display: grid;
    grid-template-columns: minmax(0, 1fr) 368px;
    gap: 37px;
    align-items: start;
}

.content {
    display: flex;
    flex-direction: column;
    gap: 37px;
}

.card {
    background-color: #fff;
    border-radius: 8px;
    padding: 73px 61px 72px;
    box-shadow: 0 5px 8px rgba(0, 0, 0, 0.05);
}

.intro {
    max-width: 848px;
}

/* Form */
.contact-form {
    display: flex;
    flex-wrap: wrap;
    margin-top: 53px;
}

.field {
    width: 100%;
    margin-bottom: 19px;
}

.field-half {
    width: 49%;
    margin-right: 1%;
}

.field label {
    display: block;
    margin-bottom: 15px;
}

.required {
    color: #8a1020;
    font-size: 17px;
}

.field input,
.field textarea {
    display: block;
    width: 100%;
    height: 48px;
    padding: 10px 14px;
    border: none;
    border-radius: 7px;
    background-color: #f4efed;
    font: inherit;
    color: inherit;
}

.field textarea {
    height: 193px;
    resize: none;
}

.terms {
    width: 100%;
    margin: 27px 0 38px;
}

.terms a {
    color: #e3496a;
    text-decoration: underline;
}

.submit-btn {
    width: 163px;
    height: 59px;
    border: none;
    border-radius: 7px;
    background-color: #e3496a;
    color: #fff;
    font: inherit;
    font-weight: 600;
    cursor: pointer;
}

/* Map */
.map {
    position: relative;
    overflow: hidden;
    font-family: Roboto, sans-serif;
}

.map-canvas {
    display: block;
    width: 100%;
}

.map-canvas text {
    stroke: rgba(255, 255, 255, 0.7);
    stroke-width: 2px;
    paint-order: stroke;
}

.place {
    font-size: 15px;
    fill: #16808c;
}

.place .green {
    fill: #1e7e34;
}

.place .slate {
    fill: #5c6f7c;
}

.place .blue {
    fill: #2a66b8;
}

.place .dark {
    fill: #222;
}

.area {
    font-size: 12px;
    font-weight: 500;
    letter-spacing: 1px;
    fill: #8792ab;
}

.road {
    font-size: 13px;
    fill: #744826;
}

.city {
    font-size: 25px;
    font-weight: 500;
    fill: #333;
}

.district {
    font-size: 17px;
    font-weight: 500;
    letter-spacing: 1px;
    fill: #56606b;
}

.map-canvas .river {
    font-size: 13px;
    fill: #5b8fc0;
    stroke: none;
}

.map button {
    display: flex;
    align-items: center;
    justify-content: center;
    border: none;
    background-color: #fff;
    cursor: pointer;
}

.map-types {
    position: absolute;
    top: 12px;
    left: 12px;
    display: flex;
    box-shadow: 0 1px 4px rgba(0, 0, 0, 0.3);
}

.map-type {
    height: 48px;
    padding: 0 22px;
    font-family: Roboto, sans-serif;
    font-size: 21px;
    color: #555;
}

.map-type.selected {
    border-right: 1px solid #eee;
    font-weight: 500;
    color: #000;
}

.map-control {
    width: 48px;
    height: 48px;
    border-radius: 2px;
    box-shadow: 0 1px 4px rgba(0, 0, 0, 0.3);
}

.map button svg {
    width: 24px;
    height: 24px;
}

.map button .pegman {
    height: 36px;
}

.map-fullscreen {
    position: absolute;
    top: 12px;
    right: 13px;
}

.map-side {
    position: absolute;
    right: 13px;
    bottom: 29px;
    display: flex;
    flex-direction: column;
    gap: 39px;
}

.map-zoom {
    width: 48px;
    background-color: #fff;
    border-radius: 2px;
    box-shadow: 0 1px 4px rgba(0, 0, 0, 0.3);
}

.map-zoom button {
    width: 34px;
    height: 49px;
    margin: 0 auto;
}

.map-zoom button + button {
    border-top: 1px solid #ddd;
}

.map-brand {
    position: absolute;
    left: 8px;
    bottom: 3px;
    font-size: 24px;
    line-height: 28px;
    font-weight: 500;
    text-shadow: 0 0 2px #fff;
}

.g-blue { color: #4285f4; }
.g-red { color: #ea4335; }
.g-yellow { color: #fbbc05; }
.g-green { color: #34a853; }

.map-legal {
    position: absolute;
    right: 0;
    bottom: 0;
    display: flex;
    gap: 16px;
    padding: 0 8px;
    background-color: rgba(240, 240, 240, 0.8);
    font-size: 12px;
    line-height: 18px;
}

.map-legal a {
    font-weight: 500;
    color: #222;
}

.post-title {
    margin: 36px 0 12px;
    font-weight: 600;
}

address {
    font-style: normal;
}

/* Sidebar */
.sidebar {
    background-color: #fff;
    border-radius: 8px;
    box-shadow: 0 5px 8px rgba(0, 0, 0, 0.05);
}

.sidebar-title {
    position: relative;
    padding: 18px 0 16px;
    border-radius: 8px 8px 0 0;
    background-color: #e3496a;
    color: #fff;
    font-size: 23px;
    text-align: center;
}

.sidebar-title::after {
    content: '';
    position: absolute;
    top: 100%;
    left: 50%;
    margin-left: -12px;
    border: 12px solid transparent;
    border-top-color: #e3496a;
    border-bottom: none;
}

.sidebar-body {
    display: flex;
    flex-direction: column;
    gap: 37px;
    padding: 49px 30px 37px;
}

.contact-item {
    display: flex;
    gap: 18px;
}

.contact-icon {
    display: flex;
    align-items: center;
    justify-content: center;
    flex: none;
    width: 69px;
    height: 69px;
    border-radius: 7px;
    background-color: #e3496a;
    box-shadow: 0 5px 8px rgba(0, 0, 0, 0.05);
}

.contact-icon svg {
    width: 30px;
    height: 30px;
    fill: #fff;
}

.contact-icon .wide {
    width: 34px;
}

.contact-text {
    display: flex;
    flex-direction: column;
    padding-top: 4px;
}

.contact-label {
    font-size: 17px;
    line-height: 26px;
    font-weight: 500;
    color: #999;
}

.contact-value {
    font-size: 22px;
    line-height: 33px;
    font-weight: 500;
}

/* Talk to our team */
.talk {
    background-color: #fff;
    padding: 86px 0 103px;
    border-bottom: 13px solid #00c1c1;
}

.talk h2 {
    text-align: center;
    margin-bottom: 69px;
}

.talk-items {
    display: flex;
    justify-content: space-between;
}

.talk .contact-icon {
    background-color: #00c1c1;
}

.talk .contact-label {
    font-size: 19px;
}

.talk .contact-value {
    font-size: 27px;
    line-height: 38px;
}

/* Footer */
.footer {
    background-color: #535353;
    color: #fff;
    padding: 78px 0 88px;
}

.footer-inner {
    display: flex;
}

.footer-col {
    width: 433px;
}

.footer-col h3 {
    font-size: 30px;
    line-height: 44px;
    margin-bottom: 27px;
}

.footer-col ul {
    list-style: none;
}

.footer-col li {
    margin-bottom: 8px;
}

.footer-side {
    display: flex;
    flex-direction: column;
    align-items: center;
    margin-left: auto;
    padding-top: 8px;
}

.social {
    display: flex;
    gap: 24px;
    height: 32px;
}

.social svg {
    display: block;
    height: 32px;
    fill: #fff;
}

.facebook {
    width: 32px;
}

.twitter {
    width: 36px;
}

.agency-title {
    margin: 39px 0 16px;
    font-size: 24px;
}

.badges {
    display: flex;
    gap: 6px;
}

.badge {
    width: 93px;
    height: 72px;
    border-radius: 6px;
    background-color: #fff;
}

.ocn {
    font: 700 42px Roboto, sans-serif;
}

.ocn-city {
    font: 14px Lato, sans-serif;
    fill: #2aa5dd;
}

.nanny-ring {
    font: 6px 'Liberation Serif', serif;
    fill: #d8408c;
    text-anchor: middle;
}

.nanny {
    font-family: 'Liberation Serif', serif;
    fill: #2f78b7;
    text-anchor: middle;
}

.rec {
    font: 900 47px Lato, sans-serif;
    fill: #fff;
}

.rec-member {
    font: 22px 'Liberation Sans', sans-serif;
    fill: #2a1a63;
}

.legal {
    padding: 61px 0 59px;
    background-color: #444;
    color: #fff;
    font-size: 19px;
    line-height: 29px;
    text-align: center;
}

.legal a {
    text-decoration: underline;
}

.legal .credit {
    margin-top: 37px;
    color: #999;
}
```
